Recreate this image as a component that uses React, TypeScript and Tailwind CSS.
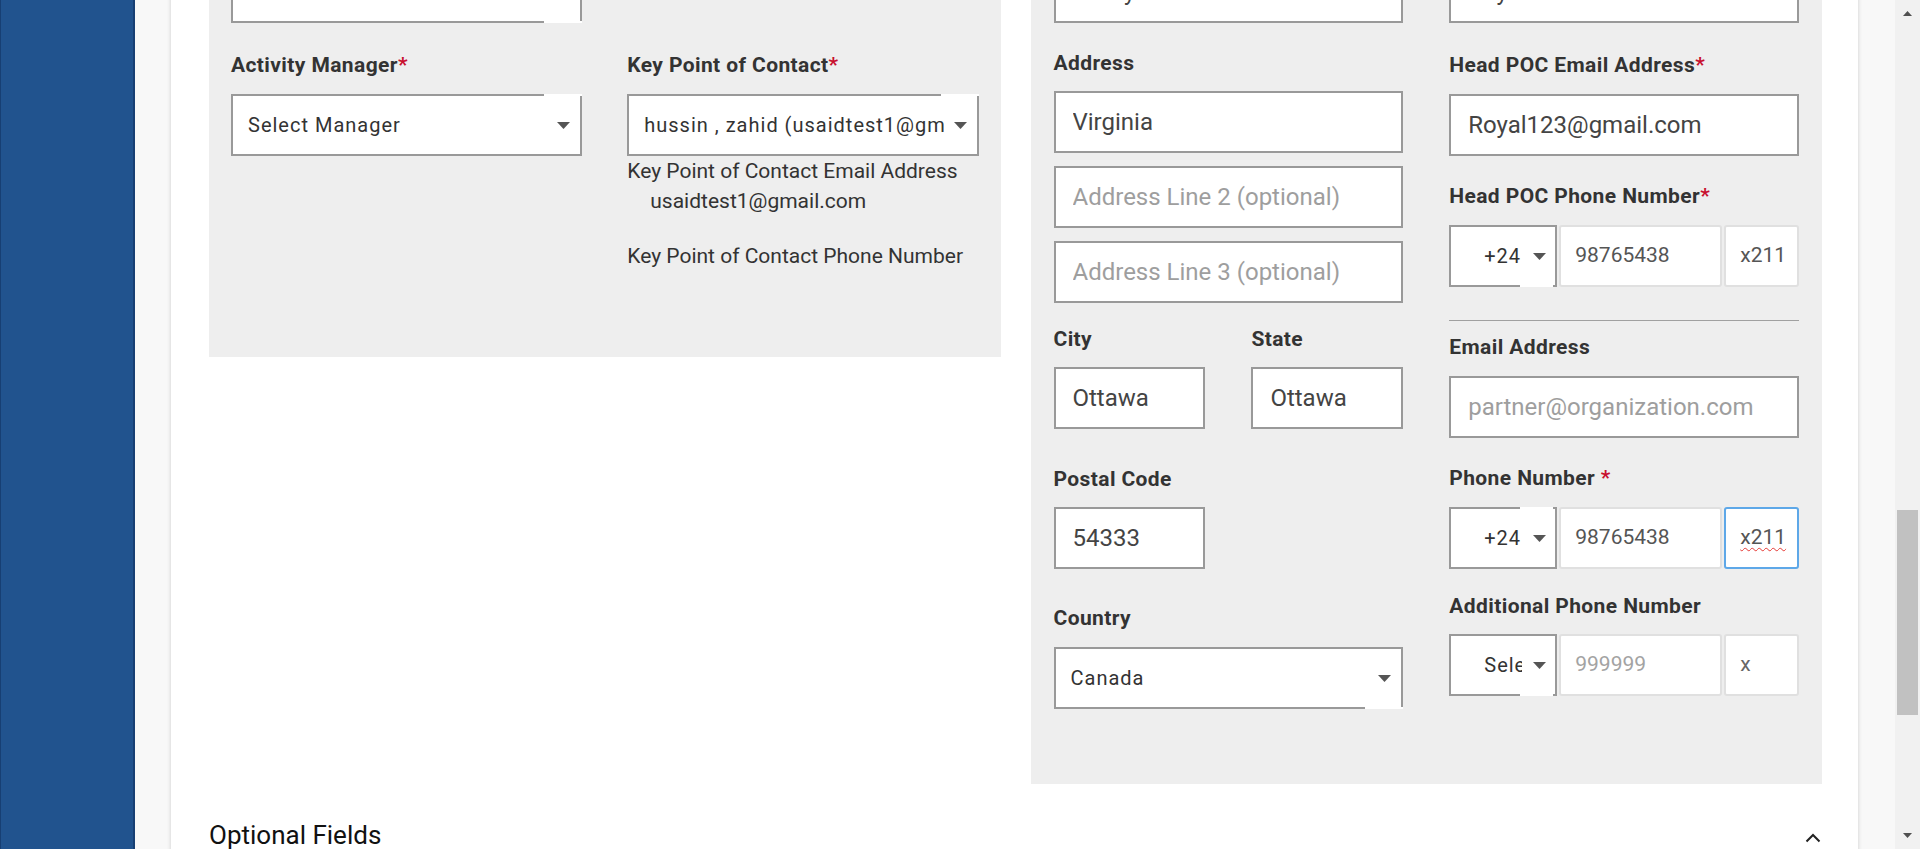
import React from 'react';

const Req = () => <span className="text-[#c8102e]">*</span>;

function Label({ children, className = '' }: { children: React.ReactNode; className?: string }) {
  return (
    <div className={`h-[28px] whitespace-nowrap text-[21px] font-bold leading-[28px] tracking-[0.4px] text-[#333] ${className}`}>
      {children}
    </div>
  );
}

function Arrow({ className = '' }: { className?: string }) {
  return (
    <svg width="13" height="7" viewBox="0 0 13 7" className={className}>
      <path d="M0 0h13L6.5 7z" fill="#555" />
    </svg>
  );
}

function TextInput({ value, placeholder, className = '' }: { value?: string; placeholder?: string; className?: string }) {
  return (
    <input
      readOnly
      defaultValue={value}
      placeholder={placeholder}
      className={`block h-[62px] w-full border-2 border-[#999] bg-white pl-[17px] text-[24px] text-[#444] outline-none placeholder:text-[#9e9e9e] ${className}`}
    />
  );
}

// selects in this form have a white notch over part of the border
function Select({ value, notch = 'top' }: { value: string; notch?: 'top' | 'bottom' }) {
  return (
    <div className="relative flex h-[62px] w-full items-center border-2 border-[#999] bg-white pl-[15px] pr-[10px]">
      <span className="flex-1 overflow-hidden whitespace-nowrap text-[20px] tracking-[1px] text-[#333]">{value}</span>
      <Arrow className="ml-[10px] shrink-0" />
      <div className={`absolute right-[-2px] h-[2px] w-[38px] bg-white ${notch === 'top' ? 'top-[-2px]' : 'bottom-[-2px]'}`} />
    </div>
  );
}

function PhoneRow({
  code,
  number,
  ext,
  codeNotch = 'bottom',
  focused = false,
}: {
  code: string;
  number?: string;
  ext?: string;
  codeNotch?: 'top' | 'bottom';
  focused?: boolean;
}) {
  return (
    <div className="flex h-[62px] w-full">
      <div className="relative mr-[2px] flex h-full w-[108px] shrink-0 items-center border-2 border-[#999] bg-white pl-[33px] pr-[9px]">
        <span className="w-[38px] overflow-hidden whitespace-nowrap text-[20px] tracking-[1px] text-[#333]">{code}</span>
        <Arrow className="ml-auto shrink-0" />
        <div className={`absolute right-[2px] h-[2px] w-[33px] bg-white ${codeNotch === 'top' ? 'top-[-2px]' : 'bottom-[-2px]'}`} />
      </div>
      <div className="mr-[2px] flex h-full w-[163px] shrink-0 items-center rounded-[3px] border-2 border-[#e0e0e0] bg-white pl-[14px] text-[21px]">
        {number ? <span className="text-[#555]">{number}</span> : <span className="text-[#a3a3a3]">999999</span>}
      </div>
      <div
        className={`flex h-full flex-1 items-center rounded-[3px] border-2 bg-white pl-[14px] text-[21px] ${
          focused ? 'border-[#5ea8e8]' : 'border-[#e0e0e0]'
        }`}
      >
        {ext ? (
          <span className={`text-[#555] ${focused ? 'underline decoration-[#e53935] decoration-wavy decoration-1 underline-offset-[3px]' : ''}`}>
            {ext}
          </span>
        ) : (
          <span className="text-[#666]">x</span>
        )}
      </div>
    </div>
  );
}

function LeftPanel() {
  return (
    <div className="grid grid-cols-2 gap-[45px] bg-[#eeeeee] px-[22px] pb-[56px]">
      <div className="flex flex-col">
        <Select value="Education Office" notch="bottom" />
        <Label className="mt-[28px] mb-[15px]">
          Activity Manager<Req />
        </Label>
        <Select value="Select Manager" />
      </div>
      <div className="flex flex-col pt-[90px]">
        <Label className="mb-[15px]">
          Key Point of Contact<Req />
        </Label>
        <Select value="hussin , zahid (usaidtest1@gmail.com)" />
        <div className="text-[21px] leading-[30px] text-[#333]">
          <div>Key Point of Contact Email Address</div>
          <div className="pl-[23px]">usaidtest1@gmail.com</div>
          <div className="mt-[25px]">Key Point of Contact Phone Number</div>
          <div className="h-[30px]" />
        </div>
      </div>
    </div>
  );
}

function RightPanel() {
  return (
    <div className="grid grid-cols-2 gap-[46px] bg-[#eeeeee] px-[23px] pb-[75px]">
      <div className="flex flex-col">
        <TextInput value="Henry" />
        <Label className="mt-[26px] mb-[14px]">Address</Label>
        <TextInput value="Virginia" />
        <TextInput placeholder="Address Line 2 (optional)" className="mt-[13px]" />
        <TextInput placeholder="Address Line 3 (optional)" className="mt-[13px]" />
        <div className="mt-[22px] grid grid-cols-2 gap-[46px]">
          <div>
            <Label className="mb-[14px]">City</Label>
            <TextInput value="Ottawa" />
          </div>
          <div>
            <Label className="mb-[14px]">State</Label>
            <TextInput value="Ottawa" />
          </div>
        </div>
        <div className="mt-[36px] grid grid-cols-2 gap-[46px]">
          <div>
            <Label className="mb-[14px]">Postal Code</Label>
            <TextInput value="54333" />
          </div>
        </div>
        <Label className="mt-[35px] mb-[15px]">Country</Label>
        <Select value="Canada" notch="bottom" />
      </div>
      <div className="flex flex-col">
        <TextInput value="Royal" />
        <Label className="mt-[28px] mb-[15px]">
          Head POC Email Address<Req />
        </Label>
        <TextInput value="Royal123@gmail.com" />
        <Label className="mt-[26px] mb-[15px]">
          Head POC Phone Number<Req />
        </Label>
        <PhoneRow code="+24" number="98765438" ext="x211" />
        <div className="mt-[33px] h-px bg-[#a0a0a0]" />
        <Label className="mt-[12px] mb-[15px]">Email Address</Label>
        <TextInput placeholder="partner@organization.com" />
        <Label className="mt-[26px] mb-[15px]">
          Phone Number <Req />
        </Label>
        <PhoneRow code="+24" number="98765438" ext="x211" codeNotch="top" focused />
        <Label className="mt-[23px] mb-[14px]">Additional Phone Number</Label>
        <PhoneRow code="Select" />
      </div>
    </div>
  );
}

function Scrollbar() {
  return (
    <div className="flex h-full w-[25px] shrink-0 flex-col bg-[#f1f1f1]">
      <div className="flex h-[26px] items-center justify-center">
        <svg width="9" height="5" viewBox="0 0 9 5">
          <path d="M0 5h9L4.5 0z" fill="#505050" />
        </svg>
      </div>
      <div className="mx-[2px] mt-[484px] h-[205px] bg-[#c1c1c1]" />
      <div className="flex-1" />
      <div className="flex h-[28px] items-center justify-center">
        <svg width="9" height="5" viewBox="0 0 9 5">
          <path d="M0 0h9L4.5 5z" fill="#505050" />
        </svg>
      </div>
    </div>
  );
}

export default function App() {
  return (
    <div className="flex h-[849px] w-[1920px] overflow-hidden font-[Roboto,sans-serif]">
      <aside className="h-full w-[135px] shrink-0 border-r-2 border-l border-[#173f73] bg-[#21538e]" />
      <main className="h-full flex-1 overflow-hidden bg-[#f8f8f8] pl-[36px] pr-[37px]">
        <div className="-mt-[39px] bg-white shadow-[0_0_4px_rgba(0,0,0,0.18)]">
          <div className="grid grid-cols-2 items-start gap-[30px] pl-[38px] pr-[36px]">
            <LeftPanel />
            <RightPanel />
          </div>
          <div className="flex items-center justify-between pl-[38px] pr-[37px] pt-[35px] pb-[20px]">
            <h2 className="text-[26px] leading-[32px] text-[#111]">Optional Fields</h2>
            <svg width="16" height="10" viewBox="0 0 16 10" className="mt-[6px]">
              <path d="M1.5 8.5L8 2l6.5 6.5" fill="none" stroke="#222" strokeWidth="2" />
            </svg>
          </div>
        </div>
      </main>
      <Scrollbar />
    </div>
  );
}
